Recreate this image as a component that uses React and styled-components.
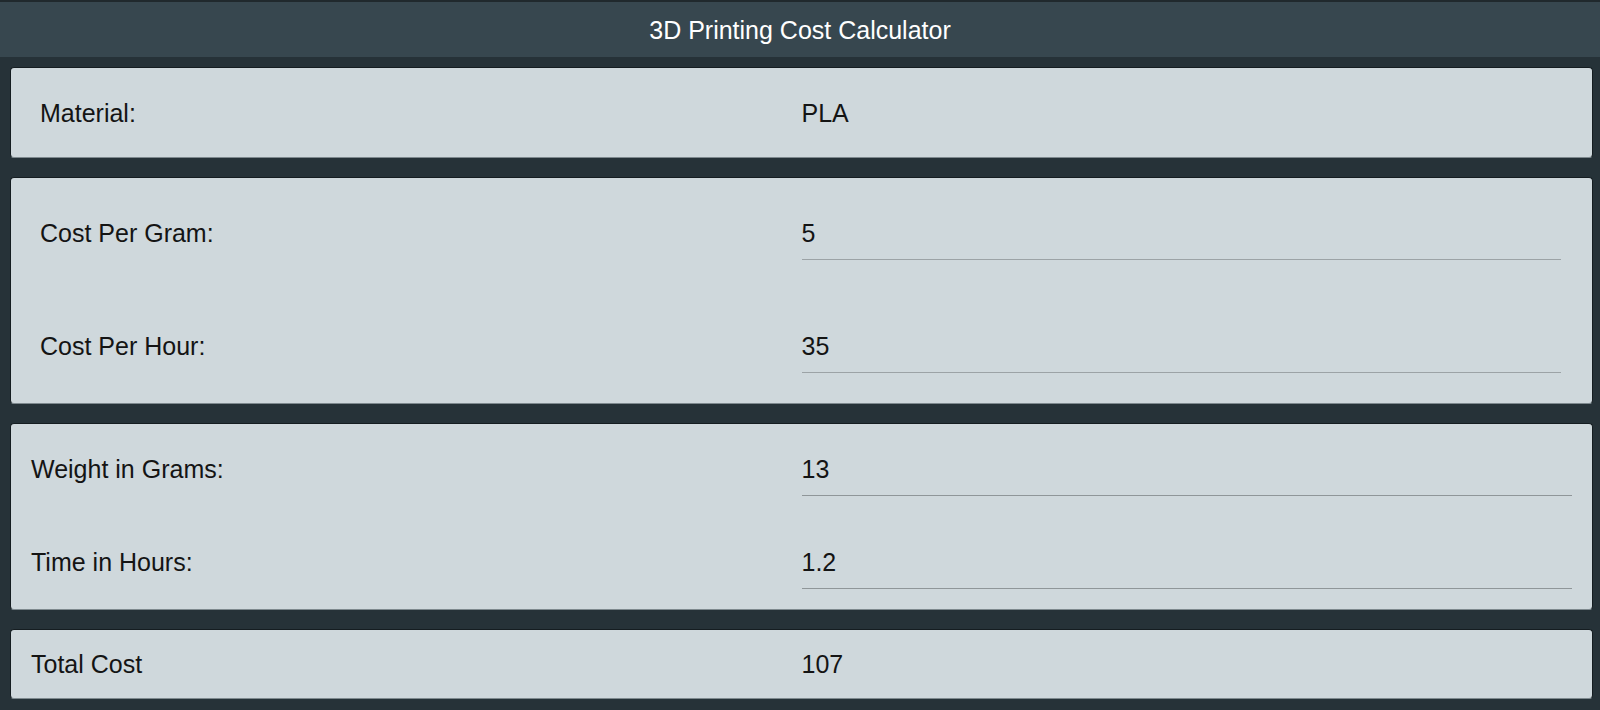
import React, { useState } from "react";
import styled, { createGlobalStyle } from "styled-components";

const GlobalStyle = createGlobalStyle`
  html, body {
    margin: 0;
    padding: 0;
    background: #263238;
    font-family: "Liberation Sans", Arial, sans-serif;
  }
  * {
    box-sizing: border-box;
  }
`;

const Header = styled.header`
  height: 57px;
  border-top: 2px solid #20292d;
  background: #37474f;
  display: flex;
  align-items: center;
  justify-content: center;
`;

const Title = styled.h1`
  margin: 0;
  color: #ffffff;
  font-size: 25px;
  font-weight: 400;
  line-height: 30px;
`;

const Content = styled.main`
  display: flex;
  flex-direction: column;
  gap: 19px;
  padding: 10px 7px 0 10px;
`;

const Card = styled.section`
  background: #cfd8dc;
  border: 1px solid #151d21;
  border-bottom-color: #7e898e;
  border-radius: 4px;
  min-height: ${(p) => p.$height}px;
  display: flex;
  flex-direction: column;
  justify-content: center;
`;

const Row = styled.div`
  display: grid;
  grid-template-columns: 1fr 1fr;
  align-items: ${(p) => (p.$height ? "end" : "center")};
  height: ${(p) => (p.$height ? `${p.$height}px` : "auto")};
  padding-bottom: ${(p) => p.$bottom || 0}px;
`;

const Label = styled.span`
  padding-left: ${(p) => p.$inset}px;
  padding-bottom: ${(p) => (p.$field ? 12 : 0)}px;
  font-size: 25px;
  line-height: 30px;
  color: #141414;
`;

const Value = styled.span`
  font-size: 25px;
  line-height: 30px;
  color: #141414;
`;

const Field = styled.input`
  display: block;
  width: calc(100% - ${(p) => p.$inset}px);
  margin: 0;
  padding: 0 0 11px 0;
  border: none;
  border-bottom: 1px solid ${(p) => p.$line};
  background: transparent;
  font-family: "Liberation Sans", Arial, sans-serif;
  font-size: 25px;
  line-height: 30px;
  height: 42px;
  color: #141414;
  outline: none;
`;

export default function App() {
  const [costGram, setCostGram] = useState("5");
  const [costHour, setCostHour] = useState("35");
  const [weight, setWeight] = useState("13");
  const [hours, setHours] = useState("1.2");

  const total =
    Math.round(
      ((parseFloat(costGram) || 0) * (parseFloat(weight) || 0) +
        (parseFloat(costHour) || 0) * (parseFloat(hours) || 0)) *
        100
    ) / 100;

  return (
    <>
      <GlobalStyle />
      <Header>
        <Title>3D Printing Cost Calculator</Title>
      </Header>
      <Content>
        <Card $height={91}>
          <Row>
            <Label $inset={29}>Material:</Label>
            <Value>PLA</Value>
          </Row>
        </Card>

        <Card $height={227}>
          <Row $height={112} $bottom={30}>
            <Label $inset={29} $field>Cost Per Gram:</Label>
            <Field
              $inset={31}
              $line="#9ca3a6"
              value={costGram}
              onChange={(e) => setCostGram(e.target.value)}
            />
          </Row>
          <Row $height={113} $bottom={30}>
            <Label $inset={29} $field>Cost Per Hour:</Label>
            <Field
              $inset={31}
              $line="#9ca3a6"
              value={costHour}
              onChange={(e) => setCostHour(e.target.value)}
            />
          </Row>
        </Card>

        <Card $height={187}>
          <Row $height={92} $bottom={20}>
            <Label $inset={20} $field>Weight in Grams:</Label>
            <Field
              $inset={20}
              $line="#8f9699"
              value={weight}
              onChange={(e) => setWeight(e.target.value)}
            />
          </Row>
          <Row $height={93} $bottom={20}>
            <Label $inset={20} $field>Time in Hours:</Label>
            <Field
              $inset={20}
              $line="#8f9699"
              value={hours}
              onChange={(e) => setHours(e.target.value)}
            />
          </Row>
        </Card>

        <Card $height={70}>
          <Row>
            <Label $inset={20}>Total Cost</Label>
            <Value>{total}</Value>
          </Row>
        </Card>
      </Content>
    </>
  );
}
